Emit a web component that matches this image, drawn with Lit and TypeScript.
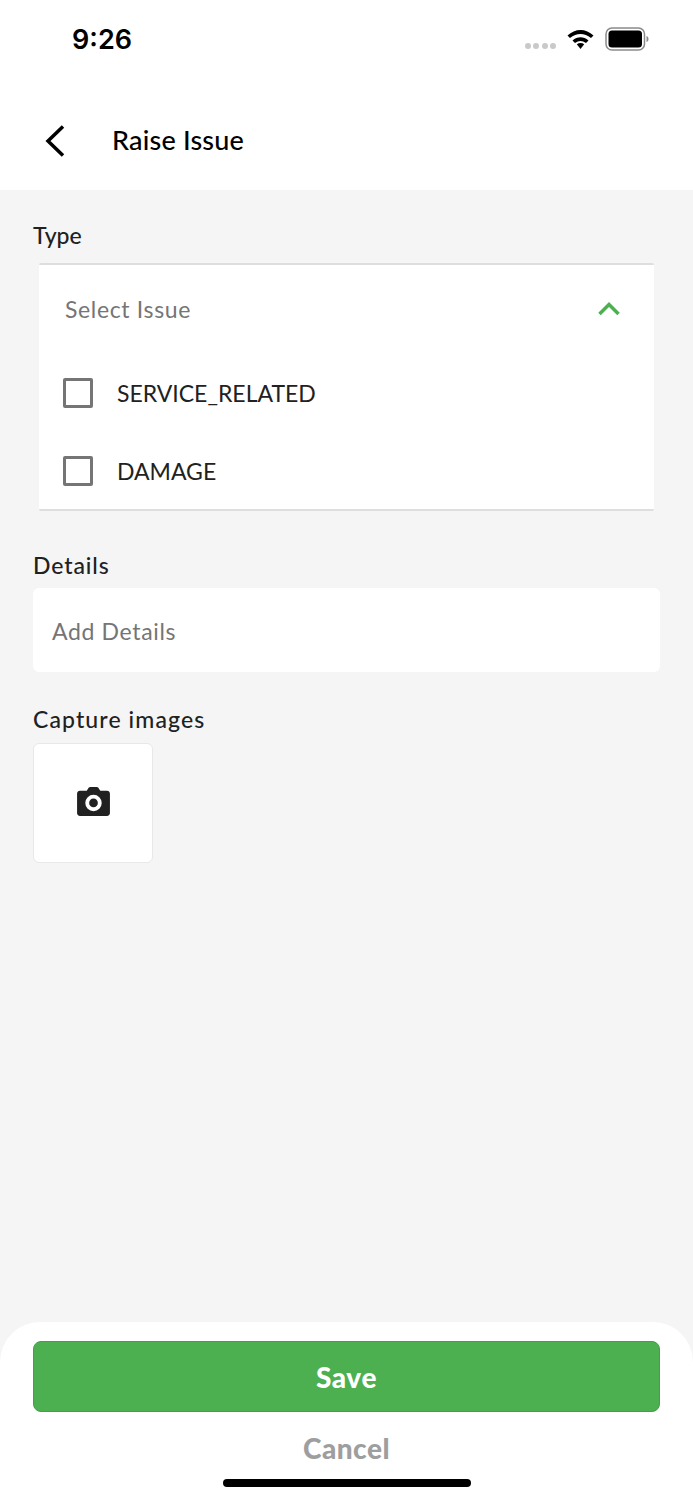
import { LitElement, html, css } from 'lit';
import { customElement } from 'lit/decorators.js';

const ISSUE_TYPES = ['SERVICE_RELATED', 'DAMAGE'];

@customElement('app-root')
export class AppRoot extends LitElement {
  static styles = css`
    :host {
      display: block;
      width: 693px;
      height: 1500px;
      font-family: Lato, 'Noto Sans', sans-serif;
      color: #212121;
      background: #f5f5f5;
    }
    .screen {
      height: 1500px;
      display: flex;
      flex-direction: column;
      overflow: hidden;
    }
    .top {
      height: 190px;
      flex: none;
      background: #fff;
      display: flex;
      flex-direction: column;
    }
    .status {
      height: 78px;
      padding: 0 44px 0 72px;
      display: flex;
      justify-content: space-between;
      align-items: center;
    }
    .time {
      font: 600 27px Inter, 'Liberation Sans', sans-serif;
      color: #000;
    }
    .status-icons {
      display: flex;
      align-items: center;
      gap: 11px;
    }
    .dots {
      display: flex;
      gap: 2.500px;
      margin-top: 13px;
    }
    .dots i {
      width: 6px;
      height: 6px;
      border-radius: 50%;
      background: #c9c9c9;
    }
    .nav {
      flex: 1;
      display: flex;
      align-items: center;
      padding: 14px 0 0 44px;
      gap: 46px;
    }
    .nav svg {
      flex: none;
    }
    .title {
      font-size: 27px;
      font-weight: 500;
      letter-spacing: 0.200px;
      line-height: 32px;
      margin-top: -2px;
      color: #000;
    }
    .content {
      flex: 1;
      padding: 30px 33px 0;
      display: flex;
      flex-direction: column;
    }
    .label {
      font-size: 23px;
      font-weight: 500;
      letter-spacing: 0.900px;
      line-height: 30px;
      color: #212121;
    }
    .type-label {
      letter-spacing: 0;
    }
    .capture-label {
      letter-spacing: 1.100px;
      margin-top: 32px;
    }
    .dropdown {
      margin: 13px 6px 0;
      height: 248px;
      box-sizing: border-box;
      background: #fff;
      border-top: 2px solid #dedede;
      border-bottom: 2px solid #dedede;
      border-radius: 2px;
      padding: 0 26px;
      display: flex;
      flex-direction: column;
    }
    .select-row {
      height: 88px;
      flex: none;
      display: flex;
      align-items: center;
      justify-content: space-between;
      padding-right: 8px;
      font-size: 23px;
      letter-spacing: 0.650px;
      color: #757575;
    }
    .options {
      flex: none;
      height: 156px;
      margin-top: 0.500px;
    }
    .option {
      height: 78px;
      display: flex;
      align-items: center;
      gap: 24px;
      font-size: 23px;
      color: #212121;
    }
    .check {
      width: 30px;
      height: 30px;
      box-sizing: border-box;
      border: 3px solid #757575;
      border-radius: 2px;
      margin-left: -2px;
      flex: none;
    }
    .details-label {
      margin-top: 39px;
    }
    .details {
      margin-top: 8px;
      height: 84px;
      box-sizing: border-box;
      background: #fff;
      border-radius: 6px;
      padding: 2px 19px 0;
      display: flex;
      align-items: center;
      font-size: 23px;
      letter-spacing: 0.650px;
      color: #757575;
    }
    .tile {
      margin-top: 9px;
      width: 120px;
      height: 120px;
      box-sizing: border-box;
      background: #fff;
      border: 1px solid #e8e8e8;
      border-radius: 6px;
      display: flex;
      align-items: center;
      justify-content: center;
    }
    .tile svg {
      margin-bottom: 3px;
    }
    .footer {
      height: 178px;
      flex: none;
      box-sizing: border-box;
      background: #fff;
      border-radius: 40px 40px 0 0;
      padding: 19px 33px 0;
      display: flex;
      flex-direction: column;
      align-items: center;
    }
    .save {
      width: 100%;
      height: 71px;
      flex: none;
      box-sizing: border-box;
      border: 1px solid #43a047;
      border-radius: 8px;
      background: #4caf50;
      color: #fff;
      font: 900 28px Lato, 'Noto Sans', sans-serif;
      letter-spacing: 0.600px;
      display: flex;
      align-items: center;
      justify-content: center;
    }
    .cancel {
      margin-top: 19px;
      height: 34px;
      line-height: 34px;
      font-size: 28px;
      font-weight: 900;
      letter-spacing: 0.500px;
      color: #9e9e9e;
    }
    .home {
      margin-top: 14px;
      width: 248px;
      height: 8px;
      border-radius: 4px;
      background: #000;
    }
  `;

  private renderStatus() {
    return html`
      <div class="status">
        <span class="time">9:26</span>
        <div class="status-icons">
          <div class="dots"><i></i><i></i><i></i><i></i></div>
          <svg width="27" height="20" viewBox="0 0 27 20">
            <path d="M0.500 6.500C8-1 19-1 26.500 6.500L24 9C17.500 3.500 9.500 3.500 3 9Z" fill="#000" />
            <path d="M5.500 11.500C10.500 7.300 16.500 7.300 21.500 11.500L19 14C15.300 11.300 11.700 11.300 8 14Z" fill="#000" />
            <path d="M9.800 15.300C12 13.700 15 13.700 17.200 15.300L13.500 20Z" fill="#000" />
          </svg>
          <svg width="44" height="24" viewBox="0 0 44 24">
            <rect x="1" y="1" width="38.500" height="22" rx="6" fill="none" stroke="#8a8a8a" stroke-width="1.500" />
            <rect x="3.500" y="3.500" width="33.500" height="17" rx="3.500" fill="#000" />
            <path d="M41.500 9C43 9.500 43.500 10.500 43.500 12S43 14.500 41.500 15Z" fill="#8a8a8a" />
          </svg>
        </div>
      </div>
    `;
  }

  render() {
    return html`
      <div class="screen">
        <div class="top">
          ${this.renderStatus()}
          <div class="nav">
            <svg width="22" height="32" viewBox="0 0 22 32">
              <path d="M19 1.500 4 16l15 14.500" fill="none" stroke="#000" stroke-width="3.500" />
            </svg>
            <span class="title">Raise Issue</span>
          </div>
        </div>
        <div class="content">
          <div class="label type-label">Type</div>
          <div class="dropdown">
            <div class="select-row">
              <span>Select Issue</span>
              <svg width="22" height="14" viewBox="0 0 22 14">
                <path d="M1.500 12 11 2.500 20.500 12" fill="none" stroke="#4caf50" stroke-width="3.500" />
              </svg>
            </div>
            <div class="options">
              ${ISSUE_TYPES.map(
                (t) => html`<div class="option"><span class="check"></span><span>${t}</span></div>`
              )}
            </div>
          </div>
          <div class="label details-label">Details</div>
          <div class="details">Add Details</div>
          <div class="label capture-label">Capture images</div>
          <div class="tile">
            <svg width="33" height="29" viewBox="0 0 34 30">
              <path
                fill="#212121"
                fill-rule="evenodd"
                d="M3 4H10L11.500 1.500C12 .6 12.800 0 14 0H20C21.200 0 22 .6 22.500 1.500L24 4H31C32.700 4 34 5.300 34 7V27C34 28.700 32.700 30 31 30H3C1.300 30 0 28.700 0 27V7C0 5.300 1.300 4 3 4ZM17 8A8.500 8.500 0 1 0 17 25 8.500 8.500 0 1 0 17 8ZM17 12A4.500 4.500 0 1 1 17 21 4.500 4.500 0 1 1 17 12Z"
              />
            </svg>
          </div>
        </div>
        <div class="footer">
          <div class="save">Save</div>
          <div class="cancel">Cancel</div>
          <div class="home"></div>
        </div>
      </div>
    `;
  }
}
